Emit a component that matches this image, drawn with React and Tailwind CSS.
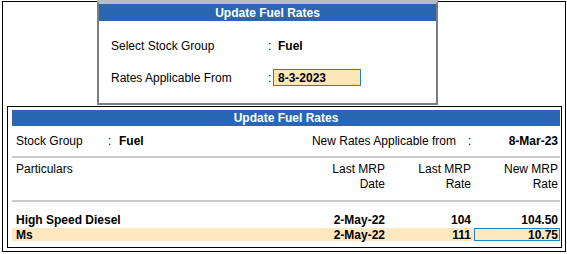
export default function App() {
  const font = { fontFamily: '"Liberation Sans", Arial, sans-serif' };
  return (
    <div className="w-[567px] h-[254px] bg-white text-[12px] text-black overflow-hidden" style={font}>
      <div className="ml-[2px] mt-[1px] w-[564px] h-[251px] border border-black flex flex-col">
        {/* Top dialog */}
        <div className="self-start ml-[94px] mt-[-2px] w-[341px] h-[105px] border-t-[4px] border-t-[#b6bdc4] border-x-2 border-b-2 border-x-[#7c7c7c] border-b-[#7c7c7c] bg-white flex flex-col relative">
          <div className="h-[17px] bg-[#2a66b2] text-white font-bold flex items-center justify-center leading-none">
            Update Fuel Rates
          </div>
          <div className="pl-[12px] mt-[16px] h-[17px] flex items-center">
            <span className="w-[157px]">Select Stock Group</span>
            <span className="w-[10px]">:</span>
            <span className="font-bold">Fuel</span>
          </div>
          <div className="pl-[12px] mt-[15px] h-[17px] flex items-center">
            <span className="w-[157px]">Rates Applicable From</span>
            <span className="w-[5px]">:</span>
            <span className="h-[17px] w-[88px] border border-[#1e85c4] bg-[#fde6b8] pl-[4px] font-bold flex items-center">
              8-3-2023
            </span>
          </div>
        </div>

        {/* Lower report */}
        <div className="mx-[3px] ml-[4px] mt-[1px] h-[142px] border border-black pl-[4px] pr-[1px] pt-[3px] flex flex-col">
          <div className="h-[16px] bg-[#2a66b2] text-white font-bold flex items-center justify-center leading-none">
            Update Fuel Rates
          </div>
          <div className="h-[30px] flex items-center pl-[4px] pr-[2px]">
            <span className="w-[92px]">Stock Group</span>
            <span className="w-[11px]">:</span>
            <span className="font-bold">Fuel</span>
            <span className="ml-auto">New Rates Applicable from</span>
            <span className="ml-[12px] w-[4px]">:</span>
            <span className="w-[86px] text-right font-bold">8-Mar-23</span>
          </div>
          <div className="h-[2px] bg-[#cacaca]"></div>
          <div className="grid grid-cols-[1fr_86px_86px_86px] leading-[15px] pt-[4px] pb-[8px]">
            <div className="pl-[4px]">Particulars</div>
            <div className="text-right pr-[3px]">Last MRP<br />Date</div>
            <div className="text-right pr-[3px]">Last MRP<br />Rate</div>
            <div className="text-right pr-[2px]">New MRP<br />Rate</div>
          </div>
          <div className="h-[2px] bg-[#cacaca]"></div>
          <div className="mt-[9px] h-[15px] grid grid-cols-[1fr_86px_86px_86px] font-bold items-center">
            <div className="pl-[4px]">High Speed Diesel</div>
            <div className="text-right pr-[3px]">2-May-22</div>
            <div className="text-right pr-[3px]">104</div>
            <div className="text-right pr-[2px]">104.50</div>
          </div>
          <div className="mt-[2px] h-[13px] grid grid-cols-[1fr_86px_86px_86px] font-bold items-center bg-[#fde8c0] leading-none">
            <div className="pl-[4px]">Ms</div>
            <div className="text-right pr-[3px]">2-May-22</div>
            <div className="text-right pr-[3px]">111</div>
            <div className="h-[13px] text-right pr-[1px] border border-[#1e85c4] flex items-center justify-end">10.75</div>
          </div>
        </div>
      </div>
    </div>
  );
}
